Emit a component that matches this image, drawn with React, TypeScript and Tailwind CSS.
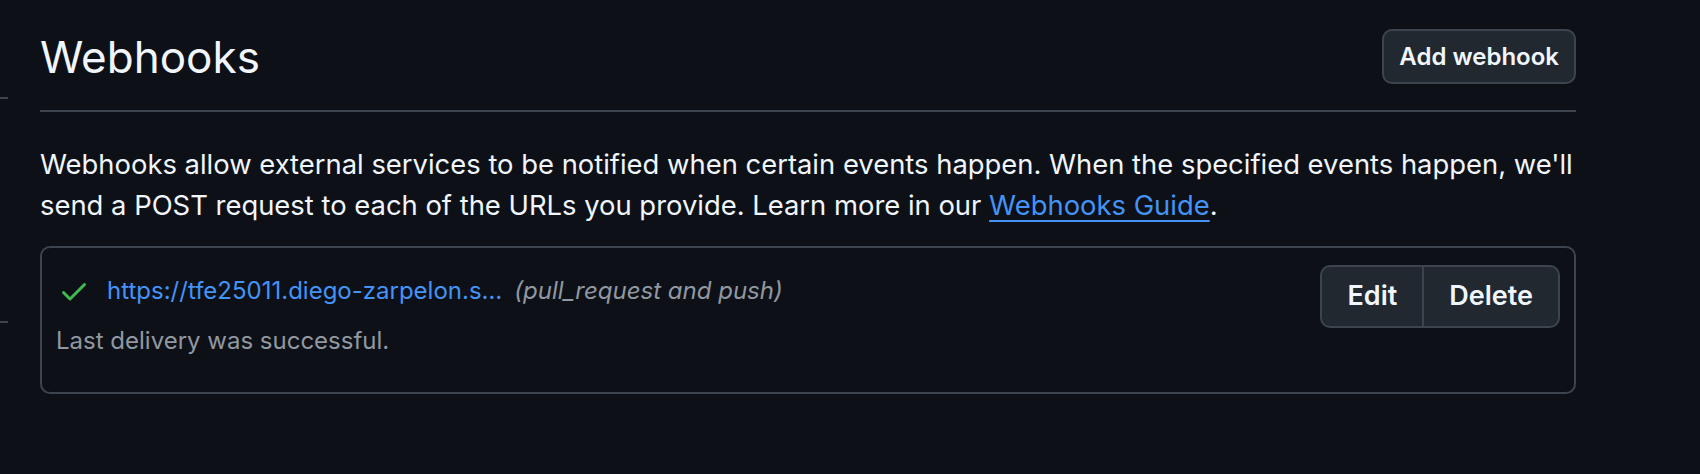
import React from 'react';

const font = { fontFamily: 'Inter, "Noto Sans", sans-serif' };

const CheckIcon = () => (
  <svg viewBox="0 0 16 16" width="32" height="32" fill="currentColor" aria-hidden="true">
    <path d="M13.78 4.22a.75.75 0 0 1 0 1.06l-7.25 7.25a.75.75 0 0 1-1.06 0L2.22 9.28a.751.751 0 0 1 .018-1.042.751.751 0 0 1 1.042-.018L6 10.94l6.72-6.72a.75.75 0 0 1 1.06 0Z" />
  </svg>
);

const HookItem = () => (
  <div className="flex items-start justify-between rounded-[10px] border-2 border-[#3d444d] pl-[14px] pr-[14px] pt-[17px] pb-[33px]">
    <div className="flex flex-col">
      <div className="flex items-center pt-[8px]">
        <span className="ml-[2px] flex w-[49px] shrink-0 items-center text-[#3fb950]">
          <CheckIcon />
        </span>
        <a className="text-[24px] leading-[36px] text-[#4493f8]" href="#">
          https://tfe25011.diego-zarpelon.s…
        </a>
        <span className="ml-[12px] text-[24px] italic leading-[36px] text-[#9198a1]">
          (pull_request and push)
        </span>
      </div>
      <div className="mt-[14px] text-[24px] leading-[36px] text-[#9198a1]">
        Last delivery was successful.
      </div>
    </div>
    <div className="flex h-[63px] overflow-hidden rounded-[10px] border-2 border-[#3d444d] bg-[#212830]">
      <button className="px-[25px] text-[27px] font-semibold text-[#f0f6fc]">Edit</button>
      <button className="border-l-2 border-[#3d444d] px-[25px] text-[27px] font-semibold text-[#f0f6fc]">
        Delete
      </button>
    </div>
  </div>
);

export default function App() {
  return (
    <div className="flex min-h-[474px] w-full bg-[#0d1117]" style={font}>
      <div className="flex w-[8px] shrink-0 flex-col">
        <div className="mt-[97px] h-[2px] bg-[#3d444d]" />
        <div className="mt-[222px] h-[2px] bg-[#3d444d]" />
      </div>
      <main className="ml-[32px] w-[1536px] pt-[28px]">
        <div className="flex items-center justify-between border-b-2 border-[#3d444d] pb-[25px]">
          <h2 className="pt-[2px] text-[44px] font-normal leading-[55px] text-[#f0f6fc]">Webhooks</h2>
          <button className="h-[55px] rounded-[10px] border-2 border-[#3d444d] bg-[#212830] px-[15px] text-[24px] font-semibold text-[#f0f6fc]">
            Add webhook
          </button>
        </div>
        <p className="mt-[32px] text-[27.4px] leading-[41px] text-[#f0f6fc]">
          Webhooks allow external services to be notified when certain events happen. When the specified events happen, we'll send a POST request to each of the URLs you provide. Learn more in our{' '}
          <a href="#" className="text-[#4493f8] underline decoration-2 underline-offset-[5px]">
            Webhooks Guide
          </a>
          .
        </p>
        <div className="mt-[20px]">
          <HookItem />
        </div>
      </main>
    </div>
  );
}
